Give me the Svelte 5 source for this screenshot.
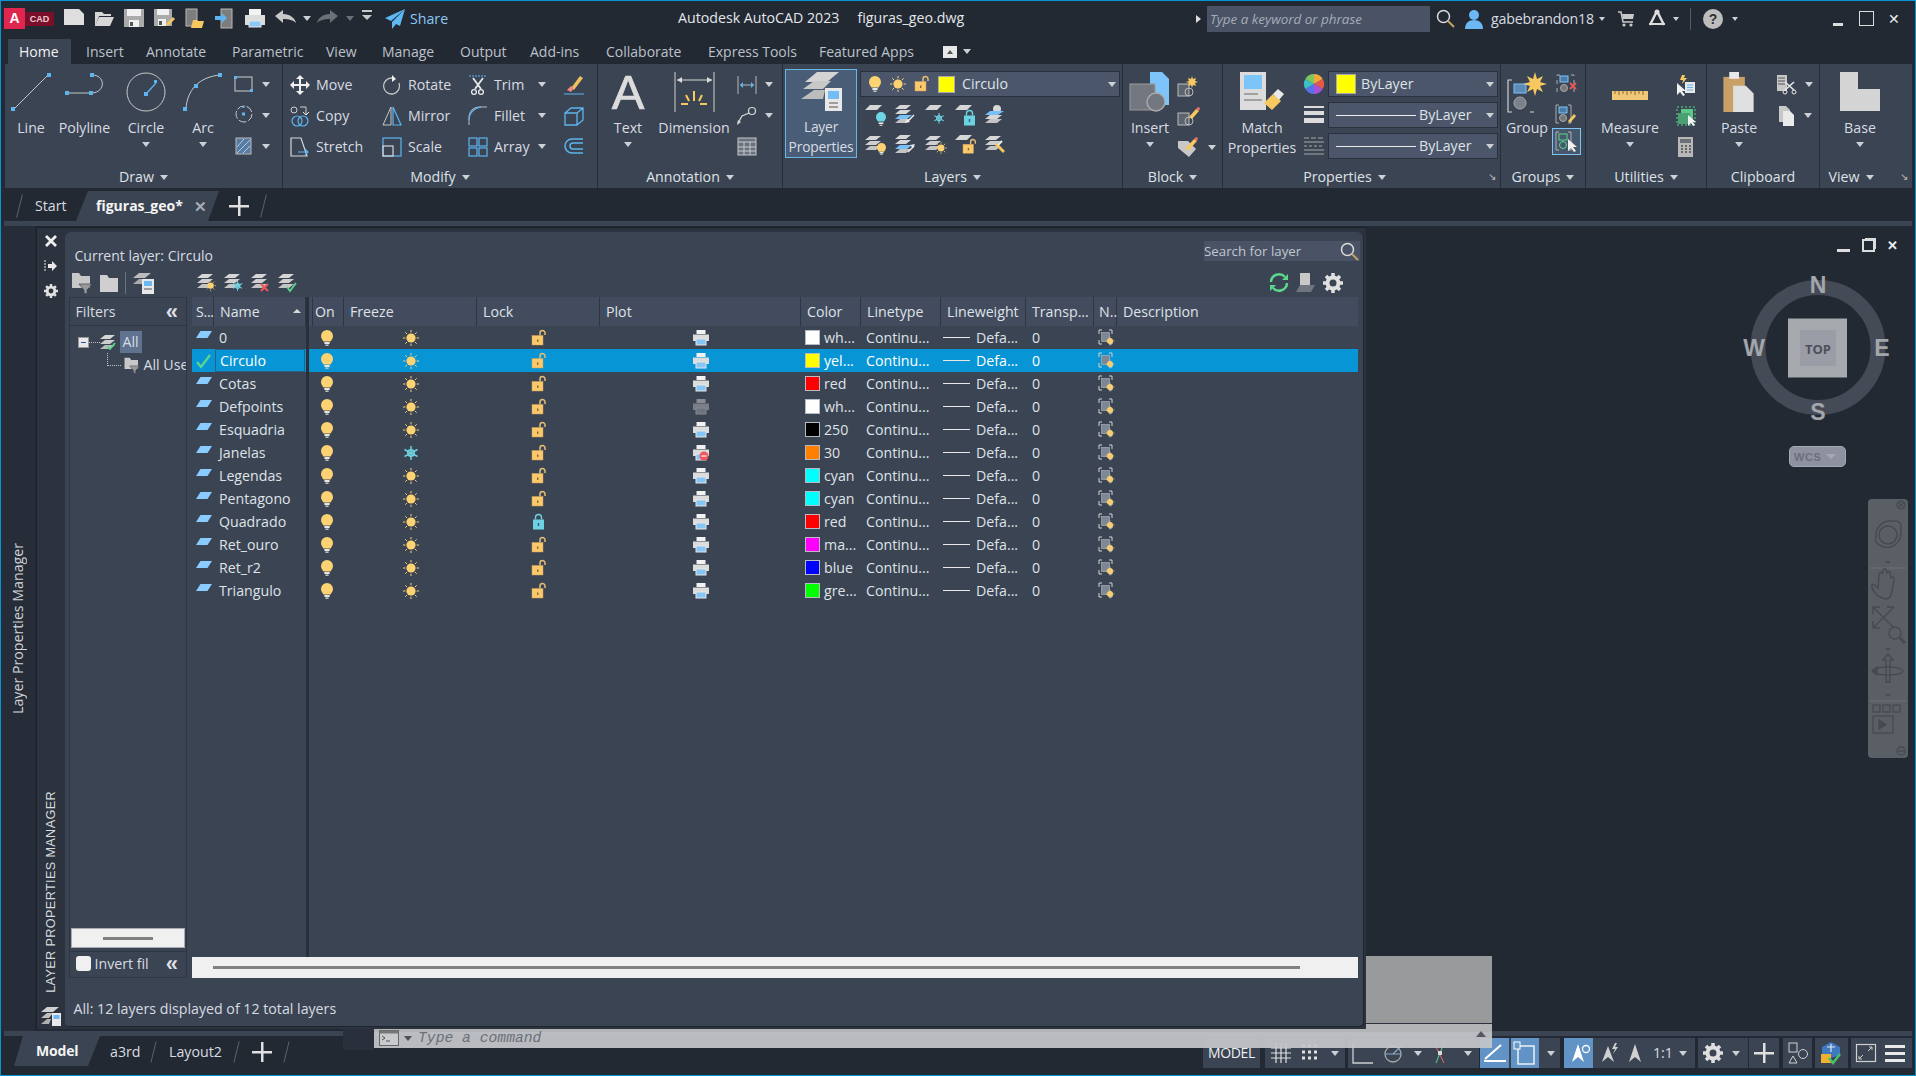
<script>
  const layers = [
    { n: '0', s: 'para', c: '#ffffff', t: 'wh...', pl: 'print' },
    { n: 'Circulo', s: 'check', c: '#ffff00', t: 'yel...', pl: 'print', sel: true },
    { n: 'Cotas', s: 'para', c: '#ff0000', t: 'red', pl: 'print' },
    { n: 'Defpoints', s: 'para', c: '#ffffff', t: 'wh...', pl: 'printoff' },
    { n: 'Esquadria', s: 'para', c: '#000000', t: '250', pl: 'print' },
    { n: 'Janelas', s: 'para', c: '#ff7f00', t: '30', pl: 'printno', fr: true },
    { n: 'Legendas', s: 'para', c: '#00ffff', t: 'cyan', pl: 'print' },
    { n: 'Pentagono', s: 'para', c: '#00ffff', t: 'cyan', pl: 'print' },
    { n: 'Quadrado', s: 'para', c: '#ff0000', t: 'red', pl: 'print', lk: true },
    { n: 'Ret_ouro', s: 'para', c: '#ff00ff', t: 'ma...', pl: 'print' },
    { n: 'Ret_r2', s: 'para', c: '#0000ff', t: 'blue', pl: 'print' },
    { n: 'Triangulo', s: 'para', c: '#00ff00', t: 'gre...', pl: 'print' }
  ];
  const heads = ['S...', 'Name', '', 'On', 'Freeze', 'Lock', 'Plot', 'Color', 'Linetype', 'Lineweight', 'Transp...', 'N..', 'Description'];
  const tabs = ['Home', 'Insert', 'Annotate', 'Parametric', 'View', 'Manage', 'Output', 'Add-ins', 'Collaborate', 'Express Tools', 'Featured Apps'];
  const layerIcons = ['l1', 'l2', 'l3', 'l4', 'l5', 'l6', 'l7', 'l8', 'l9', 'l10'];
</script>

{#snippet ic(n, w = 20, h = 20)}
  <svg class="ic" width={w} height={h} viewBox="0 0 {w} {h}"><use href="#{n}" /></svg>
{/snippet}

{#snippet ptitle(t, launch = false, caret = true)}
  <div class="ptitle"><span>{t}</span>{#if caret}<i class="car"></i>{/if}{#if launch}<span class="launch">↘</span>{/if}</div>
{/snippet}

<svg class="defs" width="0" height="0" aria-hidden="true">
  <defs>
    <g id="bulb"><path d="M6 0a6 6 0 0 1 6 6c0 2.6-1.6 3.6-2.4 5.6H2.4C1.6 9.6 0 8.6 0 6a6 6 0 0 1 6-6z" fill="#fdd272"/><rect x="3.4" y="12" width="5.2" height="2" fill="#e6e6e6"/><rect x="4.4" y="14.4" width="3.2" height="1.6" fill="#bdbdbd"/></g>
    <g id="bulbc"><path d="M5 0a5 5 0 0 1 5 5c0 2.2-1.3 3-2 4.6H2C1.300 8 0 7.200 0 5a5 5 0 0 1 5-5z" fill="#6fd6e6"/><rect x="2.600" y="10.400" width="4.800" height="1.600" fill="#e6e6e6"/><rect x="3.600" y="12.600" width="2.800" height="1.400" fill="#bdbdbd"/></g>
    <g id="sun"><circle cx="8" cy="8" r="4.600" fill="#fdd272"/><path d="M8 0v2.400M8 13.600V16M0 8h2.400M13.600 8H16M2.300 2.300l1.700 1.700M12 12l1.700 1.700M2.300 13.700 4 12M12 4l1.700-1.700" stroke="#f6cf78" fill="none"/></g>
    <g id="snow"><path d="M8 0v14M1.500 3.500l13 7M1.500 10.500l13-7" stroke="#6fd0e0" stroke-width="1.500" fill="none"/><circle cx="8" cy="7" r="3.200" fill="none" stroke="#6fd0e0" stroke-width="1.600"/></g>
    <g id="lockopen"><rect y="5.500" width="11" height="9.500" fill="#fbc86c" stroke="#caa05a" stroke-width=".5"/><rect x="5" y="9.500" width="1.400" height="2.400" fill="#7d6230"/><path d="M8 5.500V3a2.500 2.500 0 0 1 5 0v2" fill="none" stroke="#e6bd74" stroke-width="1.500"/></g>
    <g id="lockblue"><rect y="5.500" width="11" height="10" fill="#6dd3e3"/><rect x="4.800" y="9" width="1.400" height="3" fill="#33606a"/><path d="M2.500 5.500V3.500a3 3 0 0 1 6 0v2" fill="none" stroke="#6dd3e3" stroke-width="1.400"/></g>
    <g id="print"><rect x="3.500" width="9" height="4" fill="#f2f2f2"/><rect y="4.500" width="16" height="6.500" fill="#dcdcdc"/><rect x="3" y="9" width="10" height="6" fill="#86c6f6" stroke="#e6e6e6"/></g>
    <g id="printoff"><rect x="3.500" width="9" height="4" fill="#888c94"/><rect y="4.500" width="16" height="6.500" fill="#7a7e86"/><rect x="3" y="9" width="10" height="6" fill="#6d7480" stroke="#858890"/></g>
    <g id="printno"><use href="#print"/><circle cx="11" cy="11" r="4.500" fill="#f4565e"/><rect x="8.500" y="10.400" width="5" height="1.200" fill="#fff"/></g>
    <g id="para"><polygon points="4.500,0 16,0 11.500,7 0,7" fill="#8accff"/></g>
    <g id="check"><path d="M1 8l4 5 9-12" fill="none" stroke="#5cd68c" stroke-width="2.200"/></g>
    <g id="nvp" fill="none"><path d="M1 5V1h3M11 1h3v4M14 13v2h-3M4 15H1v-4" stroke="#d4d4d4"/><rect x="3.500" y="3.500" width="8" height="9" fill="#7d8796" stroke="#b4b8be" stroke-width=".6"/><circle cx="12" cy="12" r="3" fill="#fdd272"/><path d="M12 7.500v9M7.500 12h9" stroke="#e8c878" stroke-width=".7"/></g>

    <g id="sheet"><polygon points="5,0 17,0 12,5 0,5" fill="#d6d6d6"/></g>
    <g id="stk"><polygon points="5,0 16,0 11,4 0,4" fill="#d6d6d6"/><polygon points="5,5 16,5 11,9 0,9" fill="#cfcfcf"/><polygon points="5,10 16,10 11,14 0,14" fill="#c4c4c4"/></g>
    <g id="stkb"><polygon points="5,0 16,0 11,4 0,4" fill="#d6d6d6"/><polygon points="5,5 16,5 11,9 0,9" fill="#d6d6d6"/><polygon points="5,10 17,10 12,14 0,14" fill="#79c0f8"/><polygon points="5,14 16,14 11,18 0,18" fill="#c4c4c4"/></g>

    <g id="l1"><use href="#sheet" x="3"/><use href="#bulbc" x="14" y="7"/></g>
    <g id="l2"><use href="#stkb" x="3"/><path d="M22 10l-6 6" stroke="#eee" stroke-width="1.500"/><path d="M13 18l5-1-3-3z" fill="#eee"/></g>
    <g id="l3"><use href="#sheet" x="3"/><use href="#snow" transform="translate(11 8) scale(.75)"/></g>
    <g id="l4"><use href="#sheet" x="3"/><use href="#lockblue" x="12" y="5"/></g>
    <g id="l5"><circle cx="15" cy="4" r="4" fill="#d8d8d8"/><polygon points="8,6 22,6 16,10 3,10" fill="#79c0f8"/><polygon points="8,10 20,10 15,14 3,14" fill="#d6d6d6"/><polygon points="8,14 20,14 15,18 3,18" fill="#c4c4c4"/></g>
    <g id="l6"><use href="#stk" x="3" y="1"/><use href="#bulb" transform="translate(15 8) scale(.75)"/></g>
    <g id="l7"><use href="#stkb" x="3"/><path d="M16 17l6-6" stroke="#eee" stroke-width="1.500"/><path d="M23 9l-5 1 3 3z" fill="#eee"/></g>
    <g id="l8"><use href="#stk" x="3" y="1"/><use href="#sun" transform="translate(13 7) scale(.75)"/></g>
    <g id="l9"><use href="#sheet" x="3"/><use href="#lockopen" transform="translate(11 4) scale(.95)"/></g>
    <g id="l10"><use href="#stk" x="3" y="1"/><path d="M15 8l8 8-2 2-8-8z" fill="#f8c45c"/><path d="M16 10l4-4" stroke="#eee" stroke-width="2"/></g>

    <g id="t-new"><path d="M0 0h15l5 5v11H0z" fill="#dedede"/></g>
    <g id="t-open"><path d="M1 3h7l2 2h7v2H5L1 17zM1 17l4-9h15l-4 9z" fill="#d6d6d6"/></g>
    <g id="t-save"><rect width="20" height="18" fill="#aaa"/><rect x="3" width="14" height="7" fill="#f0f0f0"/><rect x="5" y="11" width="10" height="7" fill="#f0f0f0"/><rect x="6" y="13" width="3" height="4" fill="#555"/></g>
    <g id="t-saveas"><rect width="18" height="17" fill="#aaa"/><rect x="3" width="12" height="6" fill="#f0f0f0"/><rect x="4" y="10" width="8" height="7" fill="#f0f0f0"/><rect x="5" y="12" width="3" height="4" fill="#555"/><path d="M11 17l2-3 6-6 2 2-6 6z" fill="#f8c45c"/></g>
    <g id="t-web"><rect x="1" width="11" height="17" fill="#7d7d7d" stroke="#b8b8b8"/><path d="M8 11h4l1 1h6l-2 7H6z" fill="#f8c860"/></g>
    <g id="t-webs"><rect x="6" width="11" height="19" fill="#7d7d7d" stroke="#b8b8b8"/><path d="M0 7h7V4l5 5-5 5v-3H0z" fill="#5db4f0"/></g>
    <g id="t-plot"><rect x="4" width="12" height="6" fill="#f2f2f2"/><rect y="6" width="20" height="10" fill="#dcdcdc"/><rect x="4" y="12" width="12" height="6" fill="#8ac8f8" stroke="#e6e6e6"/></g>
    <g id="t-undo"><path d="M0 7l8-6v4c7 0 12 4 13 9-3-3-7-4-13-4v4z" fill="#c8c8c8"/></g>
    <g id="t-redo"><path d="M20 7l-8-6v4C5 5 0 9-1 14c3-3 7-4 13-4v4z" fill="#6a6f78"/></g>
    <g id="t-more"><rect x="1" y="1" width="10" height="2" fill="#c8c8c8"/><path d="M1 6h10l-5 5z" fill="#c8c8c8"/></g>
    <g id="t-share"><path d="M20 0L0 9l6 3zM20 0L7 13v7l4-5 4 2z" fill="#5db8f4"/></g>
    <g id="t-search" fill="none"><circle cx="7.500" cy="7.500" r="6" stroke="#dcdcdc" stroke-width="1.500"/><path d="M12 12l6 6" stroke="#c8a060" stroke-width="2"/></g>
    <g id="t-user"><circle cx="10" cy="6" r="5" fill="#6cb8f4"/><path d="M1 20c0-6 4-9 9-9s9 3 9 9z" fill="#6cb8f4"/></g>
    <g id="t-cart" fill="none"><path d="M0 2h3l2 10h10" stroke="#c8c8c8" stroke-width="1.500"/><path d="M4 4h12l-1 5H5z" fill="#c8c8c8"/><circle cx="6" cy="15" r="1.600" fill="#c8c8c8"/><circle cx="13" cy="15" r="1.600" fill="#c8c8c8"/></g>
    <g id="t-a360" fill="none"><path d="M11 2L4 16M11 2l7 14" stroke="#ddd" stroke-width="2.500"/><path d="M3 15h16" stroke="#ddd" stroke-width="2"/><circle cx="11" cy="3" r="2.500" fill="#ddd"/></g>
    <g id="t-help"><circle cx="10" cy="10" r="10" fill="#bdbdbd"/><text x="10" y="15" text-anchor="middle" font-family="Liberation Sans" font-weight="700" font-size="14" fill="#333">?</text></g>

    <g id="r-line"><path d="M3 37 37 3" stroke="#c8c8c8" fill="none"/><rect x="0" y="35" width="4" height="4" fill="#5db4f0"/><rect x="36" y="1" width="4" height="4" fill="#5db4f0"/></g>
    <g id="r-poly" fill="none"><path d="M3 21h24C42 21 42 3 28 3" stroke="#c8c8c8"/><rect x="1" y="19" width="4" height="4" fill="#5db4f0"/><rect x="25" y="19" width="4" height="4" fill="#5db4f0"/><rect x="26" y="1" width="4" height="4" fill="#5db4f0"/></g>
    <g id="r-circle" fill="none"><circle cx="20" cy="20" r="19" stroke="#c8c8c8"/><path d="M20 22l10-11" stroke="#5db4f0" stroke-width="1.300"/><rect x="18" y="20" width="4" height="4" fill="#5db4f0"/><rect x="28" y="8" width="3" height="3" fill="#5db4f0"/></g>
    <g id="r-arc" fill="none"><path d="M3 37C4 18 16 5 37 3" stroke="#c8c8c8"/><rect x="0" y="35" width="4" height="4" fill="#5db4f0"/><rect x="11" y="12" width="4" height="4" fill="#5db4f0"/><rect x="35" y="1" width="4" height="4" fill="#5db4f0"/></g>
    <g id="r-rect"><rect x="1" y="2" width="17" height="14" fill="none" stroke="#b8b8b8" stroke-width="1.200"/><rect x="0" y="1" width="3" height="3" fill="#5db4f0"/><rect x="16" y="14" width="3" height="3" fill="#5db4f0"/></g>
    <g id="r-ell"><circle cx="10" cy="8" r="8" fill="none" stroke="#c8c8c8" stroke-dasharray="8 2"/><rect x="8" y="6.500" width="3" height="3" fill="#5db4f0"/><rect x="8.500" y="0" width="2" height="2" fill="#5db4f0"/></g>
    <g id="r-hatch"><rect x="2" y="1" width="15" height="16" fill="#5a7ba0" stroke="#bbb"/><path d="M3 10l7-8M3 16L16 3M9 16l7-7" stroke="#a8cef0"/></g>
    <g id="r-move" fill="#f0f0f0"><path d="M10 0l4 4h-3v5h5V6l4 4-4 4v-3h-5v5h3l-4 4-4-4h3v-5H4v3l-4-4 4-4v3h5V4H6z"/></g>
    <g id="r-rotate" fill="none"><path d="M10 3a8 8 0 1 0 7 5" stroke="#c8c8c8" stroke-width="1.300"/><path d="M10 0v7l4-3z" fill="#f0f0f0"/></g>
    <g id="r-trim" fill="none"><path d="M1 1h18" stroke="#5db4f0" stroke-dasharray="2 1"/><path d="M5 3l8 11M15 3 7 14" stroke="#e8e8e8" stroke-width="1.800"/><circle cx="6" cy="17" r="2.400" stroke="#e8e8e8" stroke-width="1.300"/><circle cx="13" cy="17" r="2.400" stroke="#e8e8e8" stroke-width="1.300"/></g>
    <g id="r-erase"><path d="M7 13L16 1l3 2-9 12z" fill="#f0c060"/><path d="M3 15l4-4 3 2-3 4z" fill="#ef8a80"/><path d="M0 19h20" stroke="#5db4f0"/></g>
    <g id="r-copy" fill="none"><rect x="1" y="1" width="6" height="6" rx="3" stroke="#d0d0d0"/><path d="M10 1h6v7" stroke="#d0d0d0"/><path d="M13 6l3 3 3-3" stroke="#e8e8e8"/><circle cx="7" cy="15" r="5" stroke="#5db4f0" stroke-width="1.200"/><circle cx="13" cy="15" r="5" stroke="#5db4f0" stroke-width="1.200"/></g>
    <g id="r-mirror" fill="none"><path d="M9 1L1 19h8z" stroke="#c8c8c8"/><path d="M11 1l8 18h-8z" stroke="#5db4f0" stroke-width="1.200"/></g>
    <g id="r-fillet" fill="none"><path d="M1 19V12C1 5 5 1 12 1h7" stroke="#c0c0c0"/><path d="M1 14C1 7 6 2 13 1" stroke="#5db4f0" stroke-width="1.200"/></g>
    <g id="r-stretch" fill="none"><path d="M1 1h10l6 18H1z" stroke="#d8d8d8" stroke-width="1.200"/><path d="M8 15h10M15 12l3 3-3 3" stroke="#5db4f0" stroke-width="1.200"/></g>
    <g id="r-scale" fill="none"><rect x="1" y="1" width="18" height="18" stroke="#5db4f0" stroke-width="1.200"/><rect x="1" y="9" width="10" height="10" stroke="#d8d8d8" stroke-width="1.200"/></g>
    <g id="r-array" fill="none"><rect x="1" y="1" width="8" height="8" stroke="#5db4f0" stroke-width="1.200"/><rect x="11" y="1" width="8" height="8" stroke="#5db4f0" stroke-width="1.200"/><rect x="1" y="11" width="8" height="8" stroke="#5db4f0" stroke-width="1.200"/><rect x="11" y="11" width="8" height="8" stroke="#5db4f0" stroke-width="1.200"/></g>
    <g id="r-3d" fill="none"><path d="M1 7h12v12H1zM1 7l6-5h12v12l-6 5M13 7l6-5" stroke="#5db4f0" stroke-width="1.300"/></g>
    <g id="r-offset" fill="none"><path d="M19 2H8a7 7 0 0 0 0 14h11M19 6H9a3 3 0 0 0 0 6h10" stroke="#5db4f0" stroke-width="1.500"/></g>
    <g id="r-dim" fill="none"><path d="M1 0v40M40 0v40" stroke="#d0d0d0"/><path d="M3 8h35" stroke="#d8d8d8"/><path d="M3 8l5-3v6zM38 8l-5-3v6z" fill="#d8d8d8"/><path d="M20 19v10M12 23l3 6M28 23l-3 6M7 32h7M26 32h7" stroke="#f8c860" stroke-width="2"/></g>
    <g id="r-dim2" fill="none"><path d="M1 1v18M19 1v18M3 10h14" stroke="#b8b8b8"/><path d="M3 10l3-3v6zM17 10l-3-3v6z" fill="#5db4f0"/></g>
    <g id="r-lead" fill="none"><circle cx="15" cy="5" r="3.500" stroke="#d8d8d8" stroke-width="1.200"/><path d="M12 7L5 10 1 17" stroke="#d8d8d8" stroke-width="1.300"/><path d="M0 19l1-5 3 2z" fill="#d8d8d8"/></g>
    <g id="r-table"><rect x="1" y="1" width="18" height="17" fill="#6a7280" stroke="#c8c8c8"/><path d="M1 5h18M1 10h18M1 14h18M7 5v13M13 5v13" stroke="#c8c8c8"/></g>
    <g id="r-lprop"><polygon points="16,0 38,0 26,10 4,10" fill="#d4d4d4"/><polygon points="13,9 30,9 22,17 2,17" fill="#c8c8c8"/><polygon points="13,18 24,18 22,27 0,27" fill="#bcbcbc"/><rect x="24" y="16" width="17" height="23" fill="#e8e8e8"/><rect x="27" y="19" width="11" height="8" fill="#74bdf4"/><path d="M28 31h9M28 35h9" stroke="#555"/></g>
    <g id="r-insert"><path d="M20 0h12l7 7v26H20z" fill="#7cc4fa"/><rect x="0" y="12" width="25" height="26" fill="#737880" stroke="#999"/><circle cx="26" cy="30" r="9" fill="#737880" stroke="#aaa" stroke-width="1.400"/></g>
    <g id="r-ins1"><rect x="0" y="8" width="11" height="12" fill="#5e646e" stroke="#bbb"/><circle cx="11" cy="16" r="4" fill="none" stroke="#bbb"/><path d="M14 0l1 3 3-1-1 3 3 1-3 1 1 3-3-1-1 3-1-3-3 1 1-3-3-1 3-1-1-3 3 1z" fill="#f8c860"/></g>
    <g id="r-ins2"><rect x="0" y="7" width="11" height="12" fill="#5e646e" stroke="#bbb"/><circle cx="11" cy="15" r="4" fill="none" stroke="#bbb"/><path d="M11 11L18 3l3 2-7 8z" fill="#f8c860"/><path d="M18 3l3 2 1-3-2-1z" fill="#ef7070"/></g>
    <g id="r-ins3"><path d="M0 5h10l8 8-7 8-11-9z" fill="#c8c8c8"/><path d="M7 13L16 3l3 2-8 9z" fill="#f8c860"/><path d="M16 3l3 2 1-3-2-1z" fill="#ef7070"/></g>
    <g id="r-match"><rect x="0" y="0" width="26" height="38" fill="#dcdcdc"/><rect x="4" y="3" width="18" height="14" fill="#7cc4fa"/><path d="M4 22h14M4 28h18" stroke="#666"/><path d="M24 31l9-9 8 7-9 9z" fill="#f8c860"/><path d="M33 22l5-5 6 5-5 6z" fill="#e8e8e8"/></g>
    <g id="r-wheel"><path d="M10 10V0a10 10 0 0 1 8.700 5z" fill="#f2a93c"/><path d="M10 10l8.700-5a10 10 0 0 1 0 10z" fill="#e8584a"/><path d="M10 10l8.700 5A10 10 0 0 1 10 20z" fill="#a554d8"/><path d="M10 10v10a10 10 0 0 1-8.700-5z" fill="#5a70e8"/><path d="M10 10l-8.700 5a10 10 0 0 1 0-10z" fill="#3cc0c8"/><path d="M10 10L1.300 5A10 10 0 0 1 10 0z" fill="#7cc85c"/></g>
    <g id="r-lw"><rect y="1" width="20" height="2" fill="#dcdcdc"/><rect y="6" width="20" height="4" fill="#dcdcdc"/><rect y="13" width="20" height="5" fill="#dcdcdc"/></g>
    <g id="r-lt"><path d="M0 2h5m2 0h5m2 0h5M0 6h20M0 10h3m2 0h3m2 0h3m2 0h3M0 14h20M0 18h20" stroke="#a8a8a8" fill="none"/></g>
    <g id="r-group" fill="none"><path d="M5 8H1v32h4M23 8h4M23 40h4" stroke="#d0d0d0" stroke-width="1.200"/><rect x="7" y="12" width="12" height="9" fill="#5d8ab6" stroke="#7cc4fa"/><circle cx="13" cy="31" r="6" fill="#7c8088" stroke="#aaa"/><path d="M28 0l2 7 6-3-3 6 7 2-7 2 3 6-6-3-2 7-2-7-6 3 3-6-7-2 7-2-3-6 6 3z" fill="#f8c860"/></g>
    <g id="r-g1" fill="none"><path d="M3 1H0v18h3M14 1h3v18h-3" stroke="#c8c8c8" stroke-width=".8" stroke-dasharray="4 4"/><rect x="3" y="2" width="8" height="6" stroke="#7cc4fa" fill="#4c7ca8"/><circle cx="7" cy="14" r="3.500" fill="#777" stroke="#aaa"/><path d="M13 9l6 6M19 9l-6 6" stroke="#e85858" stroke-width="1.800"/></g>
    <g id="r-g2" fill="none"><path d="M3 1H0v18h3M12 1h3v18h-3" stroke="#c8c8c8" stroke-width=".8"/><rect x="3" y="3" width="8" height="6" stroke="#7cc4fa" fill="#4c7ca8"/><circle cx="7" cy="14" r="3.500" fill="#777" stroke="#aaa"/><path d="M12 17l6-7 2 2-6 7z" fill="#f8c860"/></g>
    <g id="r-g3" fill="none"><path d="M3 1H0v18h3M12 1h3v18h-3" stroke="#c8c8c8" stroke-width=".8"/><rect x="3" y="3" width="8" height="6" stroke="#5cd68c"/><circle cx="7" cy="14" r="3.500" stroke="#5cd68c"/><path d="M12 8v12l3-3 3 4 2-1-3-4h4z" fill="#f0f0f0"/></g>
    <g id="r-rule"><rect y="0" width="36" height="9" fill="#f0c878"/><path d="M3 0v3M7 0v4M11 0v3M15 0v4M19 0v3M23 0v4M27 0v3M31 0v4" stroke="#8a6a30"/></g>
    <g id="r-u1"><path d="M1 8v12l3-3 3 4 2-1-3-4h4z" fill="#f0f0f0"/><path d="M6 0l-2 5h3l-1 4 5-6H8l1-3z" fill="#f8c860"/><rect x="9" y="7" width="10" height="11" fill="#e8e8e8"/><path d="M11 10h6M11 12.500h6M11 15h6" stroke="#5db4f0"/></g>
    <g id="r-u2"><rect x="1" y="1" width="18" height="18" fill="none" stroke="#5cd68c" stroke-dasharray="2 2"/><rect x="5" y="3" width="12" height="12" fill="#5cc888"/><rect x="2" y="7" width="12" height="11" fill="#4aa070"/><path d="M12 9v11l3-3 2 3 2-1-2-3h3z" fill="#f0f0f0"/></g>
    <g id="r-calc"><rect x="2" y="0" width="15" height="20" fill="#b8b8b8"/><rect x="4" y="2" width="11" height="4" fill="#6a7078"/><path d="M5 9h2m2 0h2m2 0h2M5 12h2m2 0h2m2 0h2M5 15h2m2 0h2m2 0h2" stroke="#666" stroke-width="1.800"/></g>
    <g id="r-paste"><rect x="0" y="5" width="22" height="36" fill="#c8a068"/><rect x="6" y="0" width="10" height="7" fill="#e8e8e8"/><path d="M10 14h13l8 8v19H10z" fill="#e0e0e0"/></g>
    <g id="r-cut"><path d="M1 1h10v16H1z" fill="#c8c8c8"/><path d="M2 4h7M2 7h7M2 10h7" stroke="#555"/><path d="M9 8l9 8M18 8l-9 8" stroke="#e8e8e8" stroke-width="1.600"/><circle cx="9" cy="18" r="2" fill="none" stroke="#e8e8e8"/><circle cx="18" cy="18" r="2" fill="none" stroke="#e8e8e8"/></g>
    <g id="r-cpy"><path d="M3 0h7l4 4v12H3z" fill="#c8c8c8"/><path d="M7 5h7l4 4v11H7z" fill="#eaeaea"/></g>
    <g id="r-base"><path d="M0 0h18v17h22v22H0z" fill="#d4d4d4"/></g>
    <g id="r-togg"><rect width="14" height="12" fill="#e8e8e8"/><path d="M4 8h6L7 4z" fill="#555"/></g>

    <g id="p-x"><path d="M2 2l10 10M12 2 2 12" stroke="#f0f0f0" stroke-width="2.800"/></g>
    <g id="p-hide"><path d="M1 1v12" stroke="#e8e8e8" stroke-width="1" stroke-dasharray="2 1"/><path d="M4 5h4V2l5 5-5 5V9H4z" fill="#e8e8e8"/></g>
    <g id="gear"><circle cx="10" cy="10" r="5.500" fill="none" stroke="#e0e0e0" stroke-width="4"/><path d="M10 0v4M10 16v4M0 10h4M16 10h4M3 3l3 3M14 14l3 3M3 17l3-3M14 6l3-3" stroke="#e0e0e0" stroke-width="3.500"/></g>
    <g id="filt"><path d="M0 0h7l2 3h9v12H0z" fill="#c8c8c8"/><path d="M7 11h13l-5 6v4l-3-1v-3z" fill="#9a9a9a" stroke="#3b4453" stroke-width=".7"/></g>
    <g id="fold"><path d="M0 0h7l2 3h9v14H0z" fill="#cfcfcf"/></g>
    <g id="lstate"><polygon points="6,0 18,0 12,5 0,5" fill="#bbb"/><polygon points="6,6 18,6 12,11 0,11" fill="#aaa"/><rect x="9" y="6" width="12" height="15" fill="#e8e8e8"/><rect x="11" y="8" width="8" height="5" fill="#6cb8f4"/><path d="M11 16h8" stroke="#555"/></g>
    <g id="nl1"><use href="#stk" x="1" y="1"/><use href="#sun" transform="translate(9 7) scale(.7)"/></g>
    <g id="nl2"><use href="#stk" x="1" y="1"/><use href="#snow" transform="translate(9 8) scale(.7)"/></g>
    <g id="nl3"><use href="#stk" x="1" y="1"/><path d="M11 11l7 7M18 11l-7 7" stroke="#ef5858" stroke-width="2"/></g>
    <g id="nl4"><use href="#stk" x="1" y="1"/><path d="M10 14l3 4 6-8" stroke="#5cd68c" stroke-width="1.800" fill="none"/></g>
    <g id="refresh" fill="none"><path d="M2 9a8 8 0 0 1 14-5M18 10a8 8 0 0 1-14 5" stroke="#5cd68c" stroke-width="2.500"/><path d="M19 1v6h-6zM1 18v-6h6z" fill="#5cd68c"/></g>
    <g id="settbl"><rect x="4" y="0" width="10" height="13" fill="#c8c8c8"/><polygon points="4,12 19,12 15,19 0,19" fill="#707680"/></g>
    <g id="lsmall"><polygon points="5,0 15,0 10,4 0,4" fill="#d6d6d6"/><polygon points="5,5 15,5 10,9 0,9" fill="#ccc"/><polygon points="5,10 15,10 10,14 0,14" fill="#bbb"/><path d="M7 11l3 3 5-6" stroke="#5cd68c" stroke-width="1.800" fill="none"/></g>
    <g id="pmgr"><polygon points="6,0 18,0 12,5 0,5" fill="#d0d0d0"/><polygon points="6,6 12,6 8,11 0,11" fill="#c0c0c0"/><polygon points="6,12 10,12 8,17 0,17" fill="#b0b0b0"/><rect x="11" y="6" width="9" height="13" fill="#e8e8e8"/><rect x="12.500" y="8" width="6" height="4" fill="#6cb8f4"/></g>
    <g id="cmdic"><rect x="0.500" y="0.500" width="19" height="15" fill="#c8cacd" stroke="#666"/><rect x="0.500" y="0.500" width="19" height="3" fill="#777"/><path d="M3 6l3 2-3 2M7 11h4" stroke="#555" fill="none"/></g>

    <g id="s-grid"><path d="M5 0v20M10 0v20M15 0v20M0 5h20M0 10h20M0 15h20" stroke="#e0e0e0" stroke-width="1.200"/></g>
    <g id="s-snap"><path d="M2 3h3M8 3h3M14 3h3M2 9h3M8 9h3M14 9h3M2 15h3M8 15h3M14 15h3" stroke="#e0e0e0" stroke-width="3"/></g>
    <g id="s-ortho" fill="none"><path d="M1 0v20h20" stroke="#d0d0d0" stroke-width="1.300"/></g>
    <g id="s-polar" fill="none"><circle cx="9" cy="11" r="8" stroke="#a8a8a8" stroke-width="1.300"/><path d="M9 11l9-9M1 11h16" stroke="#8aa8c8" stroke-width="1.200"/></g>
    <g id="s-iso"><path d="M2 0l10 20" stroke="#ef6a6a"/><path d="M12 0 4 20" stroke="#5cd68c"/><rect x="6" y="8" width="4" height="4" fill="#d8d8d8"/></g>
    <g id="s-dyn" fill="none"><path d="M1 18h22" stroke="#fff" stroke-width="2"/><path d="M2 16L18 2" stroke="#fff" stroke-width="2"/></g>
    <g id="s-osnap" fill="none"><rect x="4" y="4" width="16" height="18" stroke="#fff" stroke-width="1.300"/><rect x="0" y="0" width="6" height="7" fill="#6798c8" stroke="#fff"/></g>
    <g id="s-annot"><path d="M10 2L4 20l6-5 6 5z" fill="#fff"/><circle cx="18" cy="7" r="3.500" fill="none" stroke="#fff" stroke-width="1.300"/></g>
    <g id="s-annot2"><path d="M9 4L3 20l6-5 6 5z" fill="#d0d0d0"/><path d="M16 1l-3 6h3l-2 5 5-7h-3l2-4z" fill="#d0d0d0"/></g>
    <g id="s-annot3"><path d="M10 2L4 20l6-5 6 5z" fill="#d0d0d0"/></g>
    <g id="s-plus"><rect x="9" width="2.500" height="20" fill="#e0e0e0"/><rect y="9" width="20" height="2.500" fill="#e0e0e0"/></g>
    <g id="s-iso2" fill="none"><rect x="1" y="0" width="8" height="9" stroke="#d0d0d0"/><circle cx="15" cy="11" r="4.500" stroke="#d0d0d0"/><path d="M5 13l4 7H1z" stroke="#d0d0d0"/></g>
    <g id="s-hw"><path d="M10 0l9 5v8l-9 3-9-3V5z" fill="#3d7ac0"/><path d="M10 2v8M6 5h8" stroke="#e8e8e8" stroke-width="1.200"/><rect x="0" y="12" width="10" height="9" fill="#f0b030"/><path d="M8 16l4 5 7-9" stroke="#4ac068" stroke-width="2.600" fill="none"/></g>
    <g id="s-full" fill="none"><rect x="0.500" y="0.500" width="19" height="17" stroke="#d0d0d0" stroke-width="1.200"/><path d="M12 7l4-4M13 3h3v3M7 11l-4 4M3 12v3h3" stroke="#d0d0d0"/></g>
    <g id="s-menu"><rect width="20" height="3" fill="#e8e8e8"/><rect y="7" width="20" height="3" fill="#e8e8e8"/><rect y="14" width="20" height="3" fill="#e8e8e8"/></g>
  </defs>
</svg>

<div class="app">
  <header class="title">
    <div class="logo"><b class="la">A</b><b class="lc">CAD</b></div>
    <div class="qat">
      {@render ic('t-new')}{@render ic('t-open')}{@render ic('t-save')}{@render ic('t-saveas', 21)}{@render ic('t-web')}{@render ic('t-webs')}{@render ic('t-plot')}{@render ic('t-undo', 21)}<i class="car"></i>{@render ic('t-redo', 21)}<i class="car dim"></i>{@render ic('t-more', 12)}<span class="shi">{@render ic('t-share')}</span><span class="share">Share</span>
    </div>
    <div class="doc"><span>Autodesk AutoCAD 2023</span><span>figuras_geo.dwg</span></div>
    <i class="tri"></i>
    <div class="search"><em>Type a keyword or phrase</em></div>
    {@render ic('t-search')}
    {@render ic('t-user')}
    <span class="user">gabebrandon18</span><i class="car sm"></i>
    {@render ic('t-cart', 18, 18)}
    {@render ic('t-a360', 22, 20)}
    <i class="car sm"></i>
    <i class="vsep"></i>
    {@render ic('t-help')}
    <i class="car sm"></i>
    <div class="winbtn"><i class="wmin"></i><i class="wmax"></i><span>✕</span></div>
  </header>

  <nav class="tabs">
    {#each tabs as t, i}<span class:on={i === 0}>{t}</span>{/each}
    <span class="togg">{@render ic('r-togg', 14, 12)}<i class="car"></i></span>
  </nav>

  <section class="ribbon">
    <div class="panel draw">
      <div class="pbody">
        <div class="big w52">{@render ic('r-line', 41, 40)}<label>Line</label></div>
        <div class="big w55">{@render ic('r-poly', 42, 40)}<label>Polyline</label></div>
        <div class="big w68">{@render ic('r-circle', 40, 40)}<label>Circle</label><i class="car"></i></div>
        <div class="big w46">{@render ic('r-arc', 40, 40)}<label>Arc</label><i class="car"></i></div>
        <div class="smcol">
          <div>{@render ic('r-rect')}<i class="car"></i></div>
          <div>{@render ic('r-ell')}<i class="car"></i></div>
          <div>{@render ic('r-hatch')}<i class="car"></i></div>
        </div>
      </div>
      {@render ptitle('Draw')}
    </div>

    <div class="panel modify">
      <div class="mgrid">
        <div>{@render ic('r-move')}<span>Move</span></div>
        <div>{@render ic('r-rotate')}<span>Rotate</span></div>
        <div>{@render ic('r-trim')}<span>Trim</span><i class="car"></i></div>
        <div>{@render ic('r-erase')}</div>
        <div>{@render ic('r-copy')}<span>Copy</span></div>
        <div>{@render ic('r-mirror')}<span>Mirror</span></div>
        <div>{@render ic('r-fillet')}<span>Fillet</span><i class="car"></i></div>
        <div>{@render ic('r-3d')}</div>
        <div>{@render ic('r-stretch')}<span>Stretch</span></div>
        <div>{@render ic('r-scale')}<span>Scale</span></div>
        <div>{@render ic('r-array')}<span>Array</span><i class="car"></i></div>
        <div>{@render ic('r-offset')}</div>
      </div>
      {@render ptitle('Modify')}
    </div>

    <div class="panel annot">
      <div class="pbody">
        <div class="big w60"><span class="bigA">A</span><label>Text</label><i class="car"></i></div>
        <div class="big w72">{@render ic('r-dim', 41, 40)}<label>Dimension</label></div>
        <div class="smcol a">
          <div>{@render ic('r-dim2')}<i class="car"></i></div>
          <div>{@render ic('r-lead')}<i class="car"></i></div>
          <div>{@render ic('r-table')}</div>
        </div>
      </div>
      {@render ptitle('Annotation')}
    </div>

    <div class="panel layersp">
      <div class="lbody">
        <div class="lpbtn">{@render ic('r-lprop', 41, 40)}<label>Layer</label><label>Properties</label></div>
        <div class="lright">
          <div class="combo lc1">
            {@render ic('bulb', 12, 16)}{@render ic('sun', 16, 16)}{@render ic('lockopen', 14, 16)}
            <i class="sw"></i><span>Circulo</span><i class="car"></i>
          </div>
          <div class="lgrid">
            {#each layerIcons as l}<span>{@render ic(l, 24, 20)}</span>{/each}
          </div>
        </div>
      </div>
      {@render ptitle('Layers')}
    </div>

    <div class="panel block">
      <div class="pbody">
        <div class="big w54">{@render ic('r-insert', 41, 40)}<label>Insert</label><i class="car"></i></div>
        <div class="smcol b">
          <div>{@render ic('r-ins1', 22, 22)}</div>
          <div>{@render ic('r-ins2', 22, 22)}</div>
          <div>{@render ic('r-ins3', 22, 22)}<i class="car"></i></div>
        </div>
      </div>
      {@render ptitle('Block')}
    </div>

    <div class="panel props">
      <div class="pbody">
        <div class="big w78">{@render ic('r-match', 44, 40)}<label>Match</label><label>Properties</label></div>
        <div class="pcol">
          <div class="prow">{@render ic('r-wheel')}<div class="combo"><i class="sw2"></i><span>ByLayer</span><i class="car"></i></div></div>
          <div class="prow">{@render ic('r-lw')}<div class="combo"><i class="ln"></i><span>ByLayer</span><i class="car"></i></div></div>
          <div class="prow">{@render ic('r-lt')}<div class="combo"><i class="ln"></i><span>ByLayer</span><i class="car"></i></div></div>
        </div>
      </div>
      {@render ptitle('Properties', true)}
    </div>

    <div class="panel groups">
      <div class="pbody">
        <div class="big w50">{@render ic('r-group', 40, 40)}<label>Group</label></div>
        <div class="gcol">
          <div>{@render ic('r-g1')}</div>
          <div>{@render ic('r-g2', 21, 20)}</div>
          <div class="act">{@render ic('r-g3', 21, 21)}</div>
        </div>
      </div>
      {@render ptitle('Groups')}
    </div>

    <div class="panel util">
      <div class="pbody">
        <div class="big w88"><span class="rule">{@render ic('r-rule', 36, 9)}</span><label>Measure</label><i class="car"></i></div>
        <div class="smcol u">
          <div>{@render ic('r-u1')}</div>
          <div>{@render ic('r-u2')}</div>
          <div>{@render ic('r-calc')}</div>
        </div>
      </div>
      {@render ptitle('Utilities')}
    </div>

    <div class="panel clip">
      <div class="pbody">
        <div class="big w64">{@render ic('r-paste', 32, 41)}<label>Paste</label><i class="car"></i></div>
        <div class="smcol c">
          <div>{@render ic('r-cut', 21, 21)}<i class="car"></i></div>
          <div>{@render ic('r-cpy')}<i class="car"></i></div>
        </div>
      </div>
      {@render ptitle('Clipboard', false, false)}
    </div>

    <div class="panel view">
      <div class="pbody">
        <div class="big w80">{@render ic('r-base', 40, 40)}<label>Base</label><i class="car"></i></div>
      </div>
      {@render ptitle('View', true)}
    </div>
  </section>

  <div class="doctabs">
    <i class="sl first"></i>
    <span class="dstart">Start</span>
    <div class="dact"><b>figuras_geo*</b><span class="dx">✕</span></div>
    <span class="dplus">{@render ic('s-plus', 20, 20)}</span>
    <i class="sl"></i>
  </div>
  <div class="strip"></div>

  <main class="canvas">
    <div class="leftstrip"><span>Layer Properties Manager</span></div>

    <div class="cube">
      <svg width="146" height="150" viewBox="0 0 146 150">
        <circle cx="73" cy="74.500" r="60" fill="none" stroke="#444b56" stroke-width="15"/>
        <rect x="43" y="45.500" width="59" height="59" fill="#a6a9ae"/>
        <rect x="55" y="57" width="36" height="36" fill="#9a9da6"/>
        <g font-family="Liberation Sans, sans-serif" font-weight="700" font-size="23" fill="#a3a6aa" text-anchor="middle">
          <text x="73" y="20">N</text><text x="73" y="147">S</text><text x="9" y="83">W</text><text x="137" y="83">E</text>
        </g>
        <text x="73" y="80.500" text-anchor="middle" font-family="Open Sans, sans-serif" font-weight="700" font-size="13" fill="#4b515b">TOP</text>
      </svg>
    </div>
    <div class="wcs"><span>WCS</span><i></i></div>
    <div class="vpctl"><i class="vmin"></i><i class="vrest"></i><span>✕</span></div>
    <div class="navbar">
      <svg width="40" height="259" viewBox="0 0 40 259" fill="none" stroke="#464b52" stroke-width="1.300">
        <circle cx="33" cy="6" r="4"/><path d="M30 3l6 6M36 3l-6 6"/>
        <path d="M8 36a14 14 0 0 1 13-14h7a5 5 0 0 1 5 5v8a14 14 0 0 1-25 8a14 14 0 0 1 0-7z" stroke-width="1.500"/><circle cx="20" cy="36" r="9" stroke-width="1.500"/>
        <path d="M17 62h6l-3 3z" fill="#464b52" stroke="none"/><path d="M2 69h36" stroke="#666b72"/>
        <path d="M10 97c-4-4-7-9-6-11s3 0 6 3l1-14c1-2 3-2 3 0l1-4c1-2 3-2 3 0l1 3c1-2 3-2 3 0l1 5c2-2 4-1 3 2l-3 15c-1 3-3 4-6 4z" stroke-width="1.500"/>
        <path d="M5 108l21 21M26 108 5 129M5 108v7M5 108h7M26 108h-7M5 129v-7M5 129h7" stroke-width="1.500"/><circle cx="27" cy="134" r="6" stroke-width="1.500"/><path d="M32 139l5 5" stroke-width="3"/>
        <path d="M17 149h6l-3 3z" fill="#464b52" stroke="none"/>
        <path d="M20 155l-5 6h3v22h4v-22h3z" stroke-width="1.400"/><ellipse cx="20" cy="172" rx="15" ry="4" stroke-width="1.400"/><path d="M4 172l5-4v8z" fill="#464b52"/>
        <path d="M17 195h6l-3 3z" fill="#464b52" stroke="none"/><path d="M2 202h36" stroke="#666b72"/>
        <rect x="5" y="206" width="7" height="7"/><rect x="15" y="206" width="7" height="7"/><rect x="25" y="206" width="7" height="7"/><rect x="5" y="217" width="20" height="17"/><path d="M11 221l7 4.500-7 4.500z" fill="#464b52"/>
        <circle cx="33" cy="252" r="4"/><path d="M30 252h6"/>
      </svg>
    </div>

    <div class="cmd">
      <div class="hist"></div>
      <div class="cline">{@render ic('cmdic', 20, 16)}<i class="car dark"></i><em>Type a command</em><i class="up"></i></div>
    </div>

    <aside class="pal">
      <div class="pside">
        <div class="pstop">{@render ic('p-x', 14, 14)}{@render ic('p-hide', 14, 14)}<span class="gsm">{@render ic('gear', 20, 20)}</span></div>
        <span class="pvert">LAYER PROPERTIES MANAGER</span>
        {@render ic('pmgr', 20, 19)}
      </div>
      <div class="pmain">
        <div class="phead1"><span>Current layer: Circulo</span><div class="psearch"><span>Search for layer</span>{@render ic('t-search', 18, 18)}</div></div>
        <div class="phead2">
          {@render ic('filt', 20, 21)}{@render ic('fold', 18, 17)}<i class="psep"></i>{@render ic('lstate', 21, 21)}
          <span class="pg2">{@render ic('nl1', 20, 20)}{@render ic('nl2', 20, 20)}{@render ic('nl3', 20, 20)}{@render ic('nl4', 20, 20)}</span>
          <span class="pg3">{@render ic('refresh', 20, 20)}{@render ic('settbl', 20, 20)}{@render ic('gear', 20, 20)}</span>
        </div>
        <div class="pbody2">
          <div class="filters">
            <div class="fhead"><span>Filters</span><b>«</b></div>
            <div class="tree">
              <div class="t1"><i class="minus"></i><i class="dots"></i>{@render ic('lsmall', 16, 15)}<span>All</span></div>
              <div class="t2"><i class="elbow"></i>{@render ic('filt', 20, 21)}<span>All Use</span></div>
            </div>
            <div class="fscroll"><i></i></div>
            <div class="finv"><i class="cb"></i><span>Invert fil</span><b>«</b></div>
          </div>
          <div class="tbl">
            <div class="trow thead">
              {#each heads as h}<div class="hc">{h}{#if h === 'Name'}<i class="sort"></i>{/if}</div>{/each}
            </div>
            {#each layers as l}
              <div class="trow" class:sel={l.sel}>
                <div class="cs">{@render ic(l.s, 16, 14)}</div>
                <div class="cn" class:box={l.sel}>{l.n}</div>
                <div class="gap"></div>
                <div class="cc">{@render ic('bulb', 12, 16)}</div>
                <div class="cc">{#if l.fr}{@render ic('snow', 16, 14)}{:else}{@render ic('sun', 16, 16)}{/if}</div>
                <div class="cc">{#if l.lk}{@render ic('lockblue', 11, 16)}{:else}{@render ic('lockopen', 14, 15)}{/if}</div>
                <div class="cc">{@render ic(l.pl, 16, 16)}</div>
                <div class="ccolor"><i style="background:{l.c}"></i><span>{l.t}</span></div>
                <div class="cl">Continu...</div>
                <div class="cw"><i></i><span>Defa...</span></div>
                <div class="ct">0</div>
                <div class="cni">{@render ic('nvp', 16, 17)}</div>
                <div></div>
              </div>
            {/each}
            <div class="tspacer"></div>
            <div class="tscroll"><i></i></div>
          </div>
        </div>
        <div class="pstatus">All: 12 layers displayed of 12 total layers</div>
      </div>
    </aside>
  </main>

  <div class="strip s2"></div>

  <footer class="foot">
    <div class="mact"><b>Model</b></div>
    <span class="mt a3">a3rd</span><i class="sl"></i>
    <span class="mt l2">Layout2</span><i class="sl"></i>
    <span class="mplus">{@render ic('s-plus', 20, 20)}</span><i class="sl"></i>
    <div class="status">
      <div class="sg g1"><span>MODEL</span></div>
      <div class="sg g2">{@render ic('s-grid')}{@render ic('s-snap')}<i class="car"></i></div>
      <div class="sg g3">{@render ic('s-ortho', 22, 20)}{@render ic('s-polar', 20, 20)}<i class="car"></i>{@render ic('s-iso', 14, 20)}<i class="car"></i></div>
      <div class="sg g4"><div class="sb w29">{@render ic('s-dyn', 24, 20)}</div><div class="sb w28">{@render ic('s-osnap', 22, 22)}</div><i class="car"></i></div>
      <div class="sg g5"><div class="sb w29">{@render ic('s-annot', 22, 22)}</div>{@render ic('s-annot2', 20, 22)}{@render ic('s-annot3', 20, 22)}<span class="scale">1:1</span><i class="car"></i></div>
      <div class="sg g6">{@render ic('gear', 20, 20)}<i class="car"></i></div>
      <div class="sg g7">{@render ic('s-plus', 20, 20)}</div>
      <div class="sg g8">{@render ic('s-iso2', 20, 20)}</div>
      <div class="sg g9">{@render ic('s-hw', 22, 22)}</div>
      <div class="sg g10">{@render ic('s-full', 20, 18)}{@render ic('s-menu', 20, 17)}</div>
    </div>
  </footer>
</div>

<style>
  :global(body) { margin: 0; background: #222933; overflow: hidden; }
  .defs { position: absolute; }
  .ic { display: block; flex: none; overflow: visible; }
  .app {
    box-sizing: border-box; width: 1916px; height: 1076px; border: 1px solid #0696d7;
    background: #222933; color: #d8dce2; display: flex; flex-direction: column;
    font: 14.200px/18px "Open Sans", "Noto Sans", sans-serif; overflow: hidden;
  }
  .car { display: block; flex: none; width: 0; height: 0; border: 4px solid transparent; border-top: 5px solid #cdd1d6; border-bottom: 0; }
  .car.dim { border-top-color: #6a6f78; }
  .car.sm { border-width: 3px; border-top-width: 4px; border-bottom: 0; }
  .car.dark { border-top-color: #4c5158; }

  /* title bar */
  .title { height: 35px; display: flex; align-items: center; flex: none; }
  .logo { display: flex; align-items: center; margin-left: 3px; width: 50px; height: 21px; flex: none; }
  .la { width: 21px; height: 21px; background: #e0264f; color: #fff; font: 700 14px/21px "Liberation Sans", sans-serif; text-align: center; }
  .lc { width: 29px; height: 14px; background: #7a0f2c; color: #f0c8d0; font: 700 9px/14px "Liberation Sans", sans-serif; text-align: center; }
  .qat { display: flex; align-items: center; gap: 10px; margin-left: 10px; width: 384px; flex: none; }
  .qat .car { margin: 0 -3px; }
  .shi { margin-left: 2px; }
  .share { color: #8cc8f4; margin-left: -5px; }
  .doc { display: flex; gap: 18px; color: #e4e7ea; margin-left: 230px; width: 440px; flex: none; white-space: nowrap; margin-top: -2px; }
  .tri { border: 4px solid transparent; border-left: 5px solid #ddd; border-right: 0; margin-left: 78px; flex: none; }
  .search { width: 223px; height: 26px; background: #4a5365; margin-left: 6px; line-height: 26px; flex: none; }
  .search em { font-size: 13.400px; color: #a4acb8; padding-left: 3px; white-space: nowrap; }
  .search + .ic { margin-left: 6px; }
  .search + .ic + .ic { margin-left: 8px; }
  .user { margin-left: 7px; width: 107px; white-space: nowrap; flex: none; letter-spacing: -.2px; }
  .user + .car { margin-left: 1px; }
  .user + .car + .ic { margin-left: 13px; }
  .user + .car + .ic + .ic { margin-left: 10px; }
  .user + .car + .ic + .ic + .car { margin-left: 5px; }
  .vsep { width: 1px; height: 22px; background: #555b66; margin-left: 11px; }
  .vsep + .ic { margin-left: 12px; }
  .vsep + .ic + .car { margin-left: 9px; }
  .winbtn { display: flex; align-items: center; margin-left: 95px; color: #eee; }
  .wmin { width: 10px; height: 3px; background: #ddd; margin-top: 11px; }
  .wmax { width: 13px; height: 13px; border: 1px solid #ddd; margin-left: 16px; }
  .winbtn span { margin-left: 14px; font-size: 14px; }

  /* ribbon tabs */
  .tabs {
    height: 28px; flex: none; padding-left: 7px; padding-top: 3px; box-sizing: border-box; display: grid; font-size: 14px;
    grid-template-columns: 66px 60px 86px 94px 56px 78px 70px 76px 102px 111px 136px 40px; color: #bcc2cb;
  }
  .tabs span { line-height: 25px; padding-left: 12px; white-space: nowrap; }
  .tabs .on { background: #3b4453; color: #f2f2f2; padding-left: 11px; width: 63px; box-sizing: border-box; }
  .tabs .togg { display: flex; align-items: center; gap: 6px; padding-left: 0; }

  .ribbon { height: 124px; flex: none; margin: 0 3px 0 4px; background: #3b4453; display: flex; }
  .panel { height: 124px; display: flex; flex-direction: column; box-sizing: border-box; border-right: 1px solid #272d38; flex: none; }
  .panel:last-child { border-right: 0; }
  .draw { width: 278px; } .modify { width: 315px; } .annot { width: 185px; } .layersp { width: 340px; } .block { width: 100px; }
  .props { width: 278px; } .groups { width: 85px; } .util { width: 121px; } .clip { width: 113px; } .view { width: 92px; }
  .pbody { height: 102px; display: flex; }
  .ptitle { height: 22px; display: flex; align-items: center; justify-content: center; gap: 6px; position: relative; color: #dfe2e7; }
  .props .ptitle { padding-right: 34px; }
  .view .ptitle { padding-right: 30px; }
  .launch { position: absolute; right: 4px; top: 1px; font-size: 10px; color: #bbb; }

  .big { display: flex; flex-direction: column; align-items: center; padding-top: 8px; box-sizing: border-box; flex: none; }
  .big label { display: block; line-height: 19px; white-space: nowrap; }
  .big .ic { height: 40px; margin-bottom: 6px; }
  .big .car { margin-top: 5px; }
  .big .ic + label + label { margin-top: 1px; }
  .w46 { width: 46px; } .w50 { width: 52px; } .w52 { width: 52px; } .w54 { width: 54px; } .w55 { width: 55px; } .w60 { width: 60px; }
  .w64 { width: 64px; } .w68 { width: 68px; } .w72 { width: 72px; } .w78 { width: 78px; } .w80 { width: 80px; } .w88 { width: 88px; }
  .smcol { display: flex; flex-direction: column; margin-left: 8px; padding-top: 5px; }
  .smcol > div { height: 31px; display: flex; align-items: center; gap: 8px; }
  .smcol.a { margin-left: 7px; }
  .smcol.b { margin-left: 1px; padding-top: 8px; }
  .smcol.b > div { height: 30px; }
  .smcol.u { margin-left: 2px; }
  .smcol.c { margin-left: 5px; }
  .mgrid { height: 102px; display: grid; box-sizing: border-box; padding: 5px 0 0 7px; grid-template-columns: 92px 86px 96px 34px; grid-template-rows: repeat(3, 31px); }
  .mgrid > div { display: flex; align-items: center; }
  .mgrid span { margin-left: 6px; }
  .mgrid .car { margin-left: auto; margin-right: 18px; }
  .bigA { font: 400 49px/40px "Liberation Sans", sans-serif; color: #dcdcdc; height: 40px; margin-bottom: 6px; -webkit-text-stroke: .7px #dcdcdc; }
  .lbody { height: 102px; display: flex; }
  .lpbtn {
    width: 72px; height: 89px; margin: 5px 0 0 2px; box-sizing: border-box; border: 1px solid #6bb4e8; background: #4a5d76;
    display: flex; flex-direction: column; align-items: center; padding-top: 2px; text-align: center; white-space: nowrap;
  }
  .lpbtn .ic { height: 40px; margin-bottom: 5px; }
  .lpbtn label { line-height: 20px; display: block; font-size: 13.800px; letter-spacing: -.2px; }
  .lright { margin: 7px 0 0 3px; width: 260px; }
  .combo {
    display: flex; align-items: center; height: 26px; box-sizing: border-box; background: #4b566a; border: 1px solid #2a313c; color: #dfe3e8; position: relative;
  }
  .lc1 { padding-left: 8px; gap: 9px; }
  .sw { width: 17px; height: 17px; background: #ff0; border: 1px solid #aaa; box-sizing: border-box; flex: none; }
  .combo > .car { position: absolute; right: 3px; top: 10px; }
  .lc1 span { margin-left: -2px; }
  .lgrid { display: grid; grid-template-columns: repeat(5, 24px); column-gap: 6px; grid-template-rows: 30px 30px; margin: 3px 0 0 2px; align-items: center; }
  .pcol { display: flex; flex-direction: column; gap: 5px; padding-top: 7px; margin-left: 4px; }
  .prow { display: flex; align-items: center; gap: 4px; width: 192px; }
  .prow .combo { width: 170px; flex: none; padding-left: 7px; gap: 3px; }
  .prow .sw2 + span { margin-left: 2px; }
  .sw2 { width: 20px; height: 20px; background: #ff0; border: 1px solid #aaa; box-sizing: border-box; }
  .ln { width: 80px; height: 1px; background: #ececec; }
  .props .big { margin-left: 1px; width: 76px; }
  .gcol { display: flex; flex-direction: column; align-items: center; padding-top: 5px; margin-left: -1px; width: 29px; }
  .gcol > div { height: 30px; display: flex; align-items: center; }
  .gcol .act { height: 27px; width: 29px; box-sizing: border-box; border: 1px solid #7cc4f8; background: #48586c; justify-content: center; margin-top: -1px; }
  .rule { height: 40px; margin-bottom: 6px; display: flex; align-items: center; padding-top: 6px; box-sizing: border-box; }
  .rule .ic { height: 9px; margin: 0; }

  /* doc tabs */
  .doctabs { height: 33px; flex: none; display: flex; align-items: flex-end; box-sizing: border-box; }
  .sl { display: block; flex: none; width: 1px; height: 24px; background: #5b6472; transform: rotate(14deg); margin-bottom: 3px; }
  .sl.first { margin-left: 18px; }
  .dstart { margin-left: 15px; line-height: 30px; width: 41px; }
  .dact {
    width: 143px; height: 30px; background: #3b4453; display: flex; align-items: center; padding-left: 20px; box-sizing: border-box;
    clip-path: polygon(12px 0, 100% 0, 132px 100%, 0 100%); color: #f4f4f4; flex: none;
  }
  .dact b { font-weight: 700; font-size: 14px; width: 98px; white-space: nowrap; flex: none; }
  .dx { color: #a8aeb6; font-size: 15px; font-weight: 700; }
  .dplus { margin-left: 10px; margin-bottom: 5px; }
  .dplus + .sl { margin-left: 14px; }
  .strip { height: 5px; margin: 0 3px; background: #3b4453; flex: none; }

  /* canvas */
  .canvas { position: relative; height: 805px; flex: none; display: flex; }
  .leftstrip { width: 34px; background: #262d38; display: flex; flex-direction: column; justify-content: flex-end; align-items: center; padding-bottom: 317px; box-sizing: border-box; }
  .leftstrip span { writing-mode: vertical-rl; transform: rotate(180deg); color: #d0d4da; white-space: nowrap; }

  .cube { position: absolute; left: 1744px; top: 47px; }
  .cube svg { display: block; overflow: visible; }
  .wcs {
    position: absolute; left: 1788px; top: 220px; width: 57px; height: 21px; box-sizing: border-box; background: #8e919f; border: 1px solid #a6a8b4; border-radius: 5px;
    display: flex; align-items: center; gap: 5px; padding-left: 4px; font: 700 11px "Liberation Sans", sans-serif; color: #6c6f7d; letter-spacing: .6px;
  }
  .wcs i { border: 5px solid transparent; border-top: 5px solid #a6a8b4; border-bottom: 0; }
  .vpctl { position: absolute; left: 1836px; top: 10px; display: flex; align-items: center; color: #eee; }
  .vmin { width: 13px; height: 3px; background: #ddd; margin-top: 10px; }
  .vrest { width: 9px; height: 9px; border: 2px solid #ddd; margin-left: 12px; box-shadow: 2px -2px 0 -1px #ddd; }
  .vpctl span { margin-left: 12px; font-size: 13px; font-weight: 700; }
  .navbar { position: absolute; left: 1867px; top: 273px; width: 40px; height: 259px; border-radius: 4px; background: #5a5f66; }
  .navbar svg { display: block; }

  .cmd { position: absolute; left: 373px; top: 730px; width: 1118px; }
  .cmd::before { content: ""; position: absolute; left: -31px; width: 31px; top: 73px; height: 21px; background: #2a303b; }
  .hist { height: 67px; background: #999a9b; }
  .cline {
    position: relative; height: 25px; box-sizing: border-box; background: linear-gradient(#b2b4b6 0 8px, rgba(196, 198, 202, .93) 8px); border-top: 1px solid #2c323c;
    display: flex; align-items: center; padding-left: 5px; padding-top: 4px; color: #6a6f77;
  }
  .cline em { font: italic 14.700px "Liberation Mono", monospace; margin-left: 6px; }
  .cline .car { margin-left: 5px; }
  .up { position: absolute; right: 6px; top: 7px; border: 5px solid transparent; border-bottom: 6px solid #55595f; border-top: 0; }

  /* palette */
  .pal { position: absolute; left: 35px; top: 1px; width: 1330px; height: 802px; background: #2c333e; display: flex; box-sizing: border-box; border-top: 1px solid #1b2029; border-left: 1px solid #1b2029; }
  .pside { width: 28px; flex: none; display: flex; flex-direction: column; align-items: center; padding-bottom: 3px; box-sizing: border-box; }
  .pstop { display: flex; flex-direction: column; align-items: center; gap: 11px; padding-top: 6px; }
  .gsm { transform: scale(.7); margin-top: -3px; display: block; }
  .pvert { writing-mode: vertical-rl; transform: rotate(180deg); font: 12.700px "Liberation Sans", sans-serif; letter-spacing: .35px; color: #d6dade; margin-top: auto; margin-bottom: 14px; white-space: nowrap; }
  .pmain { width: 1298px; height: 794px; flex: none; margin-top: 4px; background: #3b4453; border-radius: 6px 6px 4px 4px; box-shadow: 1px 1px 0 #1f252e; padding: 0 5px 0 3.500px; box-sizing: border-box; display: flex; flex-direction: column; }
  .phead1 { height: 29px; padding-top: 9px; box-sizing: border-box; display: flex; justify-content: space-between; flex: none; }
  .phead1 > span { margin: 6px 0 0 6px; white-space: nowrap; font-size: 14px; }
  .psearch { width: 156px; height: 20px; margin-right: -2px; background: #4a5365; display: flex; justify-content: space-between; align-items: center; color: #c0c6cf; font-size: 13.300px; padding-right: 2px; box-sizing: border-box; }
  .phead2 { height: 36px; display: flex; align-items: center; flex: none; padding: 8px 0 0 3px; box-sizing: border-box; }
  .phead2 .ic + .ic { margin-left: 8px; }
  .psep { width: 1px; height: 22px; background: #6a7280; margin: 0 7px; }
  .pg2 { display: flex; gap: 7px; margin-left: 42px; }
  .pg2 .ic + .ic, .pg3 .ic + .ic { margin-left: 0; }
  .pg3 { display: flex; gap: 7px; margin-left: auto; margin-right: 15px; }
  .pbody2 { display: flex; gap: 5px; height: 681px; flex: none; }
  .filters { width: 118.500px; flex: none; border: 1px solid #2f3643; box-sizing: border-box; display: flex; flex-direction: column; }
  .fhead { height: 28px; flex: none; border-bottom: 1px solid #2f3643; display: flex; align-items: center; justify-content: space-between; padding: 0 8px 0 6px; box-sizing: border-box; }
  .fhead b, .finv b { font: 700 22px/18px "Liberation Sans", sans-serif; color: #dcdfe3; }
  .tree { flex: 1; overflow: hidden; padding-top: 5px; box-sizing: border-box; }
  .t1 { display: flex; align-items: center; margin-left: 8px; height: 22px; }
  .minus { width: 11px; height: 11px; background: #e8e8e8; border: 1px solid #999; box-sizing: border-box; position: relative; flex: none; }
  .minus::after { content: ""; position: absolute; left: 2px; right: 2px; top: 4px; height: 1px; background: #2a5a9a; }
  .dots { width: 11px; border-top: 1px dotted #c0c0c0; flex: none; }
  .t1 span { margin-left: 4px; background: #5f7390; padding: 2px 3px; }
  .t2 { display: flex; align-items: center; margin-left: 37px; white-space: nowrap; height: 24px; }
  .elbow { width: 14px; height: 13px; border-left: 1px dotted #c0c0c0; border-bottom: 1px dotted #c0c0c0; flex: none; margin-top: -12px; box-sizing: border-box; }
  .t2 .ic { transform: scale(.75); margin: 0 2px 0 1px; }
  .fscroll { height: 20px; flex: none; margin: 0 1px 3px; background: #f0f0f0; border: 1px solid #a8acb2; box-sizing: border-box; display: flex; align-items: center; justify-content: center; }
  .fscroll i { width: 50px; height: 3px; background: #808080; }
  .finv { height: 26px; flex: none; border-top: 1px solid #2f3643; display: flex; align-items: center; padding: 0 0 2px 6px; box-sizing: border-box; }
  .cb { width: 15px; height: 15px; background: #f0f0f0; border-radius: 3px; flex: none; }
  .finv span { margin-left: 4px; white-space: nowrap; }
  .finv b { margin-left: auto; margin-right: 8px; }
  .tbl { width: 1166px; flex: none; display: flex; flex-direction: column; position: relative; }
  .tbl::before { content: ""; position: absolute; left: 114px; top: 0; bottom: 21px; width: 3px; background: #2a303b; z-index: 1; }
  .trow { display: grid; grid-template-columns: 22px 92px 3px 35px 133px 123px 201px 60px 80px 85px 68px 23px 240px; height: 23px; align-items: center; flex: none; color: #dfe3e8; white-space: nowrap; }
  .thead { height: 29px; background: #434c5e; }
  .hc { height: 29px; line-height: 29px; padding-left: 6px; box-sizing: border-box; border-right: 1px solid #2f3643; position: relative; }
  .hc:nth-child(1) { padding-left: 4px; letter-spacing: -.3px; }
  .hc:nth-child(12) { padding-left: 5px; }
  .hc:last-child { border-right: 0; }
  .sort { position: absolute; right: 4px; top: 12px; border: 4px solid transparent; border-bottom: 4px solid #d8d8d8; border-top: 0; }
  .trow.sel { background: #0795d6; color: #fff; }
  .cs { padding-left: 4px; }
  .cn { padding-left: 5px; height: 23px; line-height: 23px; box-sizing: border-box; }
  .cn.box { border: 1px solid #2a5f86; line-height: 21px; padding-left: 4px; margin: 0 1px; }
  .cc { display: flex; justify-content: center; }
  .ccolor { display: flex; align-items: center; padding-left: 4px; }
  .ccolor i { width: 15px; height: 15px; border: 1px solid #b8bcc2; box-sizing: border-box; flex: none; }
  .ccolor span { margin-left: 4px; }
  .cl { padding-left: 5px; }
  .cw { display: flex; align-items: center; padding-left: 2px; }
  .cw i { width: 27px; height: 1px; background: #e8e8e8; flex: none; }
  .cw span { margin-left: 6px; }
  .ct { padding-left: 6px; }
  .cni { padding-left: 4px; }
  .tspacer { flex: 1; }
  .tscroll { height: 21px; flex: none; background: #f0f0f0; display: flex; align-items: center; padding-left: 21px; }
  .tscroll i { width: 1087px; height: 3px; background: #808080; }
  .pstatus { margin: 22px 0 0 5px; }

  /* bottom */
  .s2 { margin: 0 3px; }
  .foot { height: 38px; flex: none; display: flex; align-items: flex-start; }
  .mact { width: 86px; height: 30px; margin-left: 13px; background: #3b4453; clip-path: polygon(9px 0, 100% 0, 74px 100%, 0 100%); display: flex; align-items: center; padding-left: 22px; box-sizing: border-box; color: #f4f4f4; flex: none; }
  .mact b { font-size: 14px; letter-spacing: -.2px; }
  .mt { line-height: 31px; flex: none; }
  .a3 { margin-left: 10px; width: 34px; }
  .foot .sl { margin: 5px 0 0 9px; height: 22px; }
  .l2 { margin-left: 15px; width: 58px; }
  .mplus { margin: 6px 0 0 15px; }
  .foot .mplus + .sl { margin-left: 14px; }
  .status { margin-left: auto; margin-right: 3px; display: flex; height: 30px; margin-top: 2px; gap: 3px; }
  .sg { background: #3b4453; height: 30px; display: flex; align-items: center; box-sizing: border-box; flex: none; }
  .g1 { width: 57px; justify-content: center; color: #eef0f2; font-size: 14px; letter-spacing: -.3px; }
  .g2 { width: 80px; padding-left: 6px; gap: 9px; margin-left: 2px; }
  .g2 .car { margin-left: 2px; }
  .g3 { width: 131px; padding-left: 4px; gap: 10px; margin-right: -2px; }
  .g3 .car:last-child { margin-left: 8px; }
  .g4 { width: 80px; gap: 2px; }
  .g4 .car { margin-left: 6px; }
  .sb { height: 30px; display: flex; align-items: center; justify-content: center; background: #6193c6; flex: none; }
  .w29 { width: 29px; } .w28 { width: 28px; }
  .g5 { width: 131px; gap: 6px; margin-left: 1px; }
  .scale { margin-left: 2px; white-space: nowrap; }
  .g6 { width: 50px; padding-left: 5px; gap: 9px; }
  .g7 { width: 30px; justify-content: center; margin-left: -2px; }
  .g8 { width: 29px; justify-content: center; margin-left: 1px; }
  .g9 { width: 33px; justify-content: center; }
  .g10 { width: 61px; padding-left: 5px; gap: 9px; }
</style>
